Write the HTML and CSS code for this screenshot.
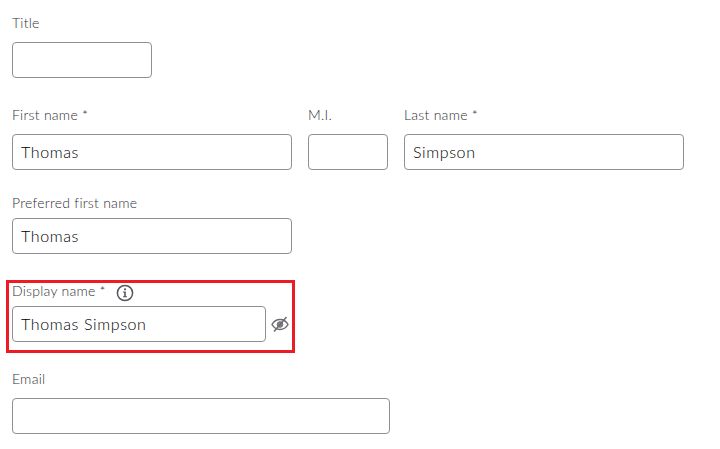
FILE: index.html
```html
<!DOCTYPE html>
<html lang="en">
<head>
<meta charset="utf-8">
<title>Profile form</title>
<link rel="stylesheet" href="styles.css">
</head>
<body>
<form class="form">
  <div class="row row-title">
    <div class="field w-140"><label class="label">Title</label><div class="input"></div></div>
  </div>
  <div class="row row-name">
    <div class="field w-280"><label class="label">First name *</label><div class="input">Thomas</div></div>
    <div class="field w-80"><label class="label">M.I.</label><div class="input"></div></div>
    <div class="field w-280"><label class="label">Last name *</label><div class="input">Simpson</div></div>
  </div>
  <div class="row row-preferred">
    <div class="field snug w-280"><label class="label">Preferred first name</label><div class="input">Thomas</div></div>
  </div>
  <div class="row row-display">
    <div class="field snug w-display">
      <div class="label label-icon">Display name *
        <svg class="info" width="18" height="18" viewBox="0 0 18 18" aria-hidden="true">
          <circle cx="9" cy="9" r="7.6" fill="none" stroke="#55575d" stroke-width="1.5"/>
          <circle cx="9" cy="5.3" r="1.1" fill="#55575d"/>
          <path d="M7.2 7.6H9.8V12.2H11V13.3H7V12.2H8.2V8.700H7.2Z" fill="#55575d"/>
        </svg>
      </div>
      <div class="input-line">
        <div class="input">Thomas Simpson</div>
        <svg class="eye" width="18" height="16" viewBox="0 0 18 16" aria-hidden="true">
          <path d="M1 8.500C3 5 5.800 3.500 9 3.500s6 1.500 8 5c-2 3.500-4.800 5-8 5S3 12 1 8.500Z" fill="none" stroke="#6b6c72" stroke-width="1.500"/>
          <circle cx="9" cy="8.500" r="2.800" fill="#85868b" stroke="#6b6c72"/>
          <path d="M3 15.500 15.500 1" stroke="#6b6c72" stroke-width="1.500" fill="none"/>
        </svg>
      </div>
    </div>
  </div>
  <div class="row">
    <div class="field w-378"><label class="label">Email</label><div class="input"></div></div>
  </div>
</form>
<div class="highlight"></div>
</body>
</html>
```
FILE: styles.css
```css
* { box-sizing: border-box; }
html, body { margin: 0; padding: 0; background: #fff; }
body { width: 720px; height: 449px; overflow: hidden; position: relative; font-family: "Lato", "Liberation Sans", sans-serif; }
.form { padding: 14px 0 0 12px; display: flex; flex-direction: column; }
.row { display: flex; gap: 16px; }
.row-title { margin-bottom: 28px; }
.row-name { margin-bottom: 24px; }
.row-preferred { margin-bottom: 28px; }
.row-display { margin-bottom: 28px; }
.field { display: flex; flex-direction: column; gap: 8px; }
.field.snug { gap: 4px; }
.w-140 { width: 140px; }
.w-280 { width: 280px; }
.w-80 { width: 80px; }
.w-378 { width: 378px; }
.w-display { width: 280px; }
.label { height: 20px; line-height: 17px; font-size: 14px; letter-spacing: .25px; font-weight: 300; color: #303136; display: block; }
.label-icon { display: flex; align-items: flex-start; gap: 10px; }
.input { height: 36px; border: 1px solid #8d9096; border-radius: 4px; padding: 0 8px; font-size: 16px; line-height: 33px; letter-spacing: .62px; font-weight: 300; color: #000; background: #fff; }
.input-line { display: flex; align-items: center; gap: 5px; }
.input-line .input { width: 254px; }
.info { flex: none; margin-top: 2px; }
.eye { flex: none; }
.highlight { position: absolute; left: 6px; top: 280px; width: 289px; height: 73px; border: 3px solid #ed1c24; pointer-events: none; }
```
